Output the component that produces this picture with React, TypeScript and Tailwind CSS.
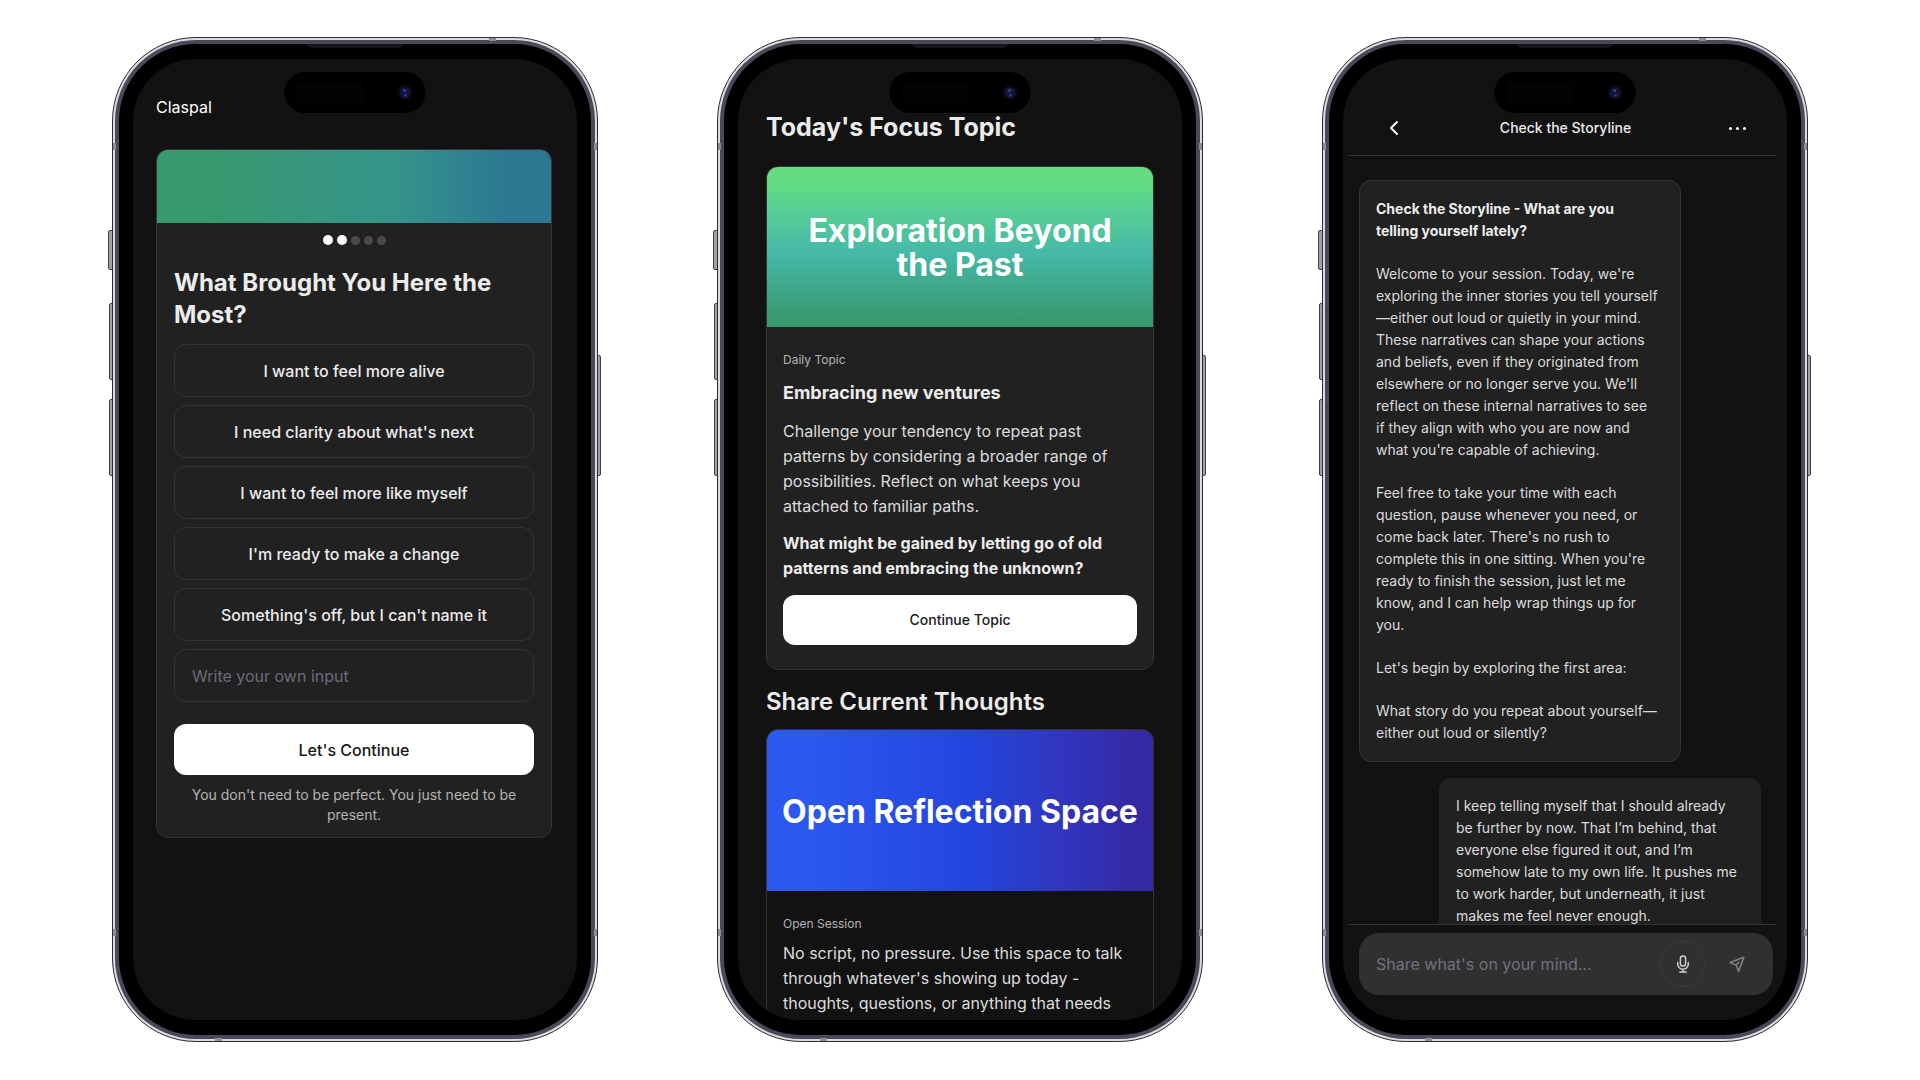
import type { ReactNode } from 'react'
import { ChevronLeft } from 'lucide-react'

/* Device frame: metal rim, bezel, side keys and dynamic island */
function Phone({ children }: { children: ReactNode }) {
  return (
    <div className="relative h-[1005px] min-w-0 max-w-[486px] flex-1">
      <span className="absolute top-[193px] -left-1 h-10 w-2 rounded-xs border border-neutral-700 bg-neutral-400" />
      <span className="absolute top-[266px] -left-[3px] h-[77px] w-2 rounded-xs border border-neutral-700 bg-neutral-400" />
      <span className="absolute top-[362px] -left-[3px] h-[77px] w-2 rounded-xs border border-neutral-700 bg-neutral-400" />
      <span className="absolute top-[318px] -right-[3px] h-[121px] w-2 rounded-xs border border-neutral-700 bg-neutral-400" />

      <div className="relative h-full rounded-[84px] border border-[#2b2b30] bg-[#dcdce0] p-[2px]">
        <span className="absolute top-0 right-[101px] h-[3px] w-[7px] bg-[#8e8c95]" />
        <span className="absolute bottom-0 left-[102px] h-[3px] w-[7px] bg-[#8e8c95]" />
        <span className="absolute top-[105px] left-0 h-[7px] w-[3px] bg-[#8e8c95]" />
        <span className="absolute top-[105px] right-0 h-[7px] w-[3px] bg-[#8e8c95]" />
        <span className="absolute bottom-[105px] left-0 h-[7px] w-[3px] bg-[#8e8c95]" />
        <span className="absolute bottom-[105px] right-0 h-[7px] w-[3px] bg-[#8e8c95]" />
        <div className="h-full rounded-[81px] bg-[#4c4858] p-1">
          <div className="relative h-full rounded-[77px] bg-black px-[14px] py-[15px]">
            <svg className="absolute top-0 left-1/2 -translate-x-1/2" width="98" height="4" viewBox="0 0 98 4" aria-hidden="true">
              <path d="M0 0h98q-2 4-6 4H6Q2 4 0 0z" fill="#151517" />
            </svg>
            <div className="relative h-full overflow-hidden rounded-[62px] bg-[#121212]">
              {children}
              <Island />
            </div>
          </div>
        </div>
      </div>
    </div>
  )
}

function Island() {
  return (
    <div className="absolute top-[13px] left-1/2 flex h-[41px] w-[141px] -translate-x-1/2 items-center justify-between rounded-full bg-black px-3">
      <span className="h-[21px] w-[68px] rounded-sm bg-[#030303]" />
      <svg width="17" height="17" viewBox="0 0 17 17" aria-hidden="true">
        <circle cx="8.500" cy="8.500" r="8" fill="#08080c" />
        <circle cx="8.500" cy="8.500" r="5.500" fill="#14143a" />
        <circle cx="8" cy="6.500" r="1.600" fill="#3a3a9c" />
        <circle cx="9" cy="11.300" r="1.400" fill="#34348c" />
      </svg>
    </div>
  )
}

const OPTIONS = [
  'I want to feel more alive',
  "I need clarity about what's next",
  'I want to feel more like myself',
  "I'm ready to make a change",
  "Something's off, but I can't name it",
]

function OnboardingScreen() {
  return (
    <div className="pr-[25px] pl-[23px]">
      <header className="pt-9 text-base leading-6 text-white">Claspal</header>
      <section className="mt-[30px] overflow-hidden rounded-xl border border-[#333] bg-[#212121]">
        <div className="h-[73px] bg-linear-to-r from-[#38996c] from-10% via-[#35948a] via-60% to-[#2c7792] to-90%" />
        <div className="px-[17px] py-3">
          <div className="flex items-center justify-center gap-1">
            <span className="size-[10px] rounded-full bg-white" />
            <span className="size-[10px] rounded-full bg-white" />
            <span className="size-[9px] rounded-full bg-[#4a4a4a]" />
            <span className="size-[9px] rounded-full bg-[#4a4a4a]" />
            <span className="size-[9px] rounded-full bg-[#4a4a4a]" />
          </div>
          <h1 className="mt-[22px] text-2xl leading-8 font-bold text-[#ececec]">What Brought You Here the Most?</h1>
          <div className="mt-[13px] flex flex-col gap-2">
            {OPTIONS.map((option) => (
              <button key={option} type="button" className="h-[53px] rounded-xl border border-[#333] text-base font-medium text-[#ececec]">
                {option}
              </button>
            ))}
            <input
              type="text"
              aria-label="Write your own input"
              placeholder="Write your own input"
              className="h-[53px] rounded-xl border border-[#333] px-[17px] text-base placeholder:text-[#6b6b7b]"
            />
          </div>
          <button type="button" className="mt-[22px] h-[51px] w-full rounded-xl bg-white text-base font-medium text-[#18181b]">
            Let's Continue
          </button>
          <p className="mt-[10px] text-center text-sm leading-5 text-[#b4b4b4]">
            You don't need to be perfect. You just need to be present.
          </p>
        </div>
      </section>
    </div>
  )
}

function FocusScreen() {
  return (
    <div className="px-7">
      <h2 className="pt-[52px] text-[25px] leading-8 font-bold text-[#ececec]">Today's Focus Topic</h2>
      <section className="mt-[23px] overflow-hidden rounded-xl border border-[#333] bg-[#212121]">
        <div className="flex h-[160px] items-center justify-center bg-linear-to-b from-[#63dc83] from-10% via-[#45b8a8] via-55% to-[#38996c] to-95% px-8 pt-0.5">
          <h3 className="text-center text-[32px] leading-[34px] font-bold text-white">Exploration Beyond the Past</h3>
        </div>
        <div className="px-4 pt-[25px] pb-6">
          <p className="text-xs leading-4 text-[#b4b4b4]">Daily Topic</p>
          <h4 className="mt-[11px] text-lg leading-7 font-bold text-[#ececec]">Embracing new ventures</h4>
          <p className="mt-3 text-base leading-[25px] text-[#dcdcdc]">
            Challenge your tendency to repeat past patterns by considering a broader range of possibilities. Reflect on what keeps you
            attached to familiar paths.
          </p>
          <p className="mt-3 text-base leading-[25px] font-bold text-[#ececec]">
            What might be gained by letting go of old patterns and embracing the unknown?
          </p>
          <button type="button" className="mt-[14px] h-[50px] w-full rounded-xl bg-white text-sm font-medium text-[#18181b]">
            Continue Topic
          </button>
        </div>
      </section>
      <h2 className="mt-4 text-2xl leading-8 font-semibold text-[#ececec]">Share Current Thoughts</h2>
      <section className="mt-[11px] overflow-hidden rounded-xl border border-[#333]">
        <div className="flex h-[161px] items-center justify-center bg-linear-to-r from-[#2b59f0] from-10% via-[#2344dc] via-55% to-[#3529a4] to-95% pt-0.5">
          <h3 className="text-center text-[32px] leading-[34px] font-bold whitespace-nowrap text-white">Open Reflection Space</h3>
        </div>
        <div className="px-4 pt-[25px] pb-6">
          <p className="text-xs leading-4 text-[#b4b4b4]">Open Session</p>
          <p className="mt-[9px] text-base leading-[25px] text-[#dcdcdc]">
            No script, no pressure. Use this space to talk through whatever's showing up today - thoughts, questions, or anything that
            needs
          </p>
        </div>
      </section>
    </div>
  )
}

function ChatScreen() {
  return (
    <div className="flex h-full flex-col pr-[11px] pl-[6px] text-sm leading-[22px] text-[#dcdcdc]">
      <header className="flex h-[97px] items-end justify-between border-b border-[#333] pr-[27px] pb-[15px] pl-[33px]">
        <button type="button" aria-label="Back" className="flex size-6 items-center justify-center text-white">
          <ChevronLeft size={26} strokeWidth={2} />
        </button>
        <h2 className="text-sm leading-6 font-medium text-[#ececec]">Check the Storyline</h2>
        <button type="button" aria-label="More" className="flex size-6 items-center justify-center gap-1 text-white">
          <span className="size-[3px] shrink-0 rounded-full bg-white" />
          <span className="size-[3px] shrink-0 rounded-full bg-white" />
          <span className="size-[3px] shrink-0 rounded-full bg-white" />
        </button>
      </header>

      <div className="flex min-h-0 flex-1 flex-col overflow-hidden pt-6 pr-[15px] pl-[10px]">
        <div className="flex w-[322px] max-w-full shrink-0 flex-col gap-[21px] rounded-xl border border-[#333] bg-[#212121] py-[17px] pr-[21px] pl-4">
          <p className="font-bold text-[#ececec]">Check the Storyline - What are you telling yourself lately?</p>
          <p>
            Welcome to your session. Today, we're exploring the inner stories you tell yourself—either out loud or quietly in your mind.
            These narratives can shape your actions and beliefs, even if they originated from elsewhere or no longer serve you. We'll
            reflect on these internal narratives to see if they align with who you are now and what you're capable of achieving.
          </p>
          <p>
            Feel free to take your time with each question, pause whenever you need, or come back later. There's no rush to complete
            this in one sitting. When you're ready to finish the session, just let me know, and I can help wrap things up for you.
          </p>
          <p>Let's begin by exploring the first area:</p>
          <p>What story do you repeat about yourself—either out loud or silently?</p>
        </div>
        <p className="mt-4 w-[322px] max-w-full shrink-0 self-end rounded-xl bg-[#212121] p-[17px]">
          I keep telling myself that I should already be further by now. That I’m behind, that everyone else figured it out, and I’m
          somehow late to my own life. It pushes me to work harder, but underneath, it just makes me feel never enough.
        </p>
      </div>

      <footer className="border-t border-[#333] pt-2 pr-[3px] pb-[25px] pl-[10px]">
        <form className="flex h-[62px] items-center gap-2 rounded-[20px] bg-[#303030] pr-[13px] pl-[17px]">
          <input
            type="text"
            aria-label="Message"
            placeholder="Share what's on your mind..."
            className="min-w-0 flex-1 text-base placeholder:text-[#71717f]"
          />
          <button type="button" aria-label="Record" className="flex size-[46px] items-center justify-center rounded-full border border-[#3c3c3c] text-[#cfcfcf]">
            <svg width="18" height="18" viewBox="0 0 18 18" fill="none" stroke="currentColor" strokeWidth="1.500" strokeLinecap="round" aria-hidden="true">
              <rect x="6.400" y="1" width="5.200" height="10" rx="2.600" />
              <path d="M3.700 7.500V9a5.300 5.300 0 0 0 10.600 0V7.500M9 14.300V17M5.800 17h6.400" />
            </svg>
          </button>
          <button type="button" aria-label="Send" className="flex size-[46px] items-center justify-center rounded-full border border-[#363636] text-[#7d7d7d]">
            <svg width="18" height="18" viewBox="0 0 18 18" fill="none" stroke="currentColor" strokeWidth="1.700" strokeLinejoin="round" aria-hidden="true">
              <path d="M15.800 2.200 2 7.500l6 2.500 2.600 6.200 5.200-14zM8 10l3.200-3.200" />
            </svg>
          </button>
        </form>
      </footer>
    </div>
  )
}

export default function App() {
  return (
    <main className="flex min-h-screen items-start justify-center gap-[119px] bg-white py-[37px] font-['Inter',sans-serif] antialiased">
      <Phone>
        <OnboardingScreen />
      </Phone>
      <Phone>
        <FocusScreen />
      </Phone>
      <Phone>
        <ChatScreen />
      </Phone>
    </main>
  )
}
